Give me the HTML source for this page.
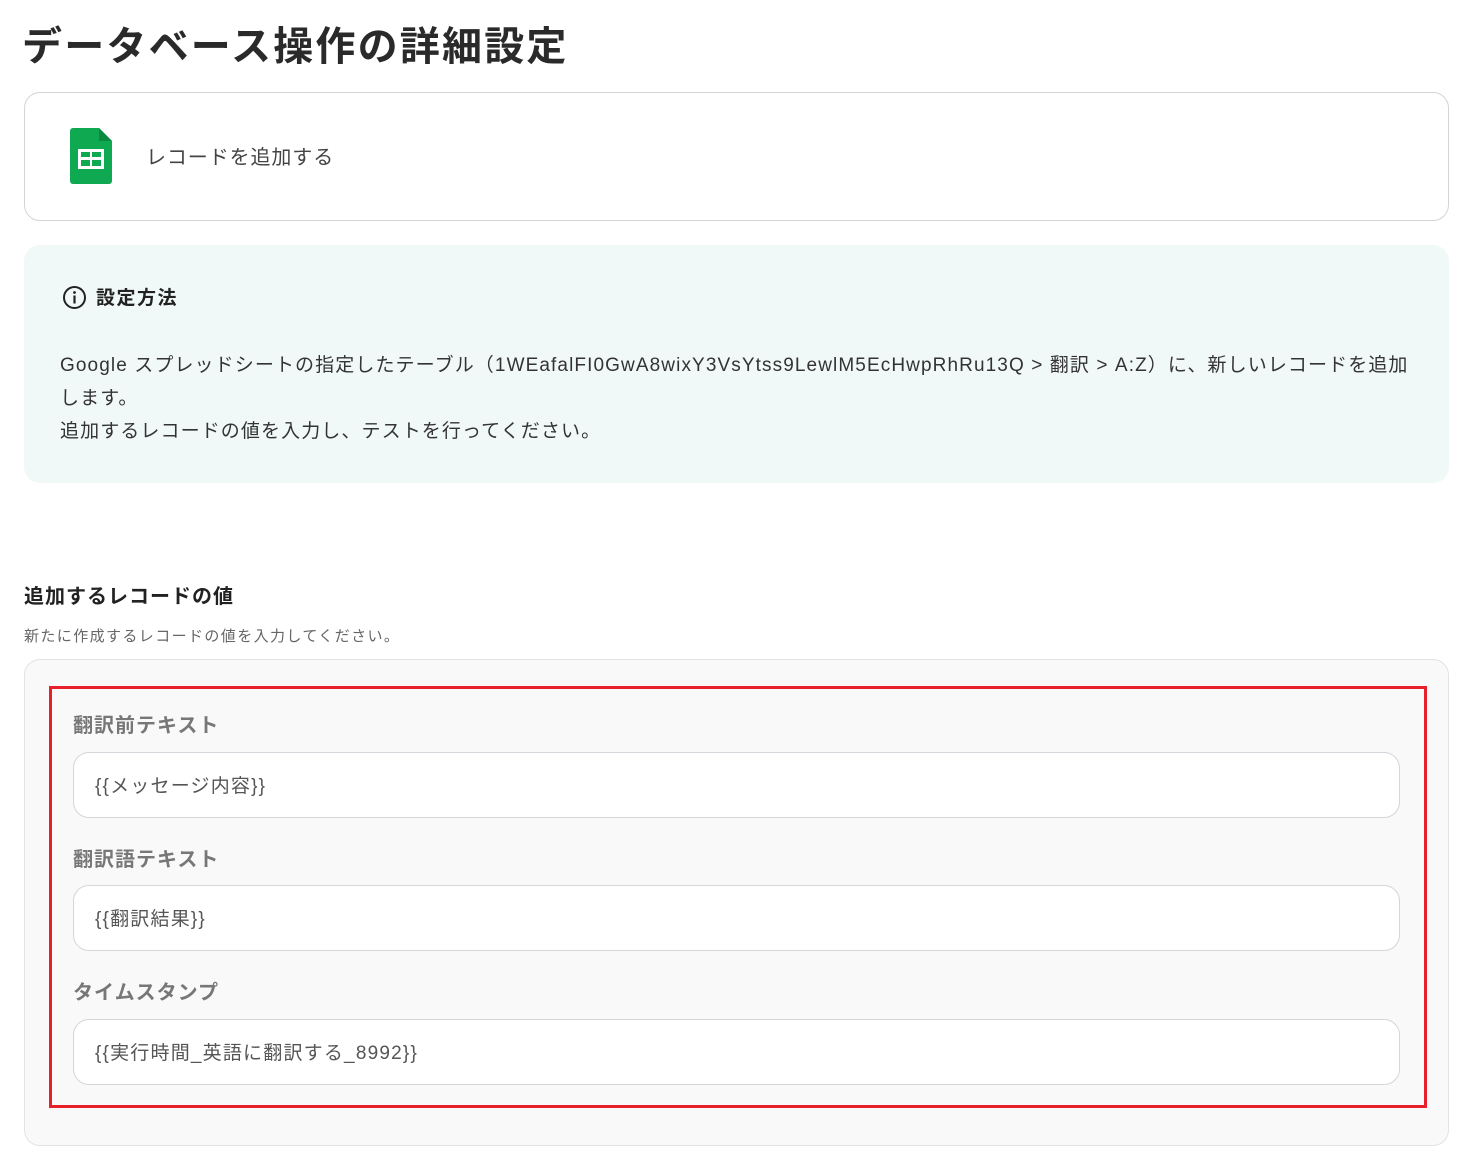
<!DOCTYPE html>
<html><head><meta charset="utf-8"><style>
*{box-sizing:border-box;margin:0;padding:0}
body{width:1473px;height:1168px;background:#fff;font-family:"Liberation Sans","Noto Sans CJK JP",sans-serif;color:#333;position:relative;overflow:hidden}
.abs{position:absolute}
h1{position:absolute;left:22px;top:14px;font-size:40px;font-weight:700;color:#2a2a2a;letter-spacing:2.2px}
.card{left:24px;top:92px;width:1425px;height:129px;border:1px solid #d4d4d4;border-radius:16px}
.info{left:24px;top:245px;width:1425px;height:238px;background:#f1f9f8;border-radius:16px}
.outer{left:24px;top:659px;width:1425px;height:487px;background:#f9f9fa;border:1px solid #e3e3e3;border-radius:16px}
.red{left:49px;top:686px;width:1378px;height:422px;border:3px solid #e8202a}
.lbl{left:73px;font-size:20px;font-weight:700;color:#777;letter-spacing:1px}
.inp{left:73px;width:1327px;height:66px;background:#fff;border:1px solid #d3d6db;border-radius:16px;font-size:19px;color:#555;padding:18px 0 0 21px;letter-spacing:1.2px}
</style></head><body>
<h1>データベース操作の詳細設定</h1>
<div class="abs card"></div>
<svg class="abs" style="left:70px;top:128px" width="42" height="56" viewBox="0 0 42 56"><path d="M3 0H29L42 13V53a3 3 0 0 1-3 3H3a3 3 0 0 1-3-3V3a3 3 0 0 1 3-3z" fill="#0ea951"/><path d="M29 0V13H42z" fill="#0a8a3f"/><rect x="8" y="21" width="26" height="20" fill="#fff"/><rect x="11" y="24" width="9" height="5" fill="#0ea951"/><rect x="22" y="24" width="9" height="5" fill="#0ea951"/><rect x="11" y="32" width="9" height="6" fill="#0ea951"/><rect x="22" y="32" width="9" height="6" fill="#0ea951"/></svg>
<div class="abs" style="left:146px;top:141px;font-size:20px;color:#444;letter-spacing:0.9px">レコードを追加する</div>
<div class="abs info"></div>
<svg class="abs" style="left:62px;top:285px" width="25" height="25" viewBox="0 0 25 25"><circle cx="12.5" cy="12.5" r="10.5" fill="none" stroke="#222" stroke-width="2"/><rect x="11.4" y="10.5" width="2.2" height="8" fill="#222"/><circle cx="12.5" cy="7.5" r="1.4" fill="#222"/></svg>
<div class="abs" style="left:96px;top:283px;font-size:19px;font-weight:700;color:#222;letter-spacing:1.5px">設定方法</div>
<div class="abs" style="left:60px;top:349px;width:1385px;font-size:19px;line-height:33px;color:#333;letter-spacing:1.1px">Google スプレッドシートの指定したテーブル（1WEafalFI0GwA8wixY3VsYtss9LewlM5EcHwpRhRu13Q &gt; 翻訳 &gt; A:Z）に、新しいレコードを追加<br>します。<br>追加するレコードの値を入力し、テストを行ってください。</div>
<div class="abs" style="left:24px;top:580px;font-size:20px;font-weight:700;color:#222;letter-spacing:1px">追加するレコードの値</div>
<div class="abs" style="left:24px;top:625px;font-size:15px;color:#666;letter-spacing:1.4px">新たに作成するレコードの値を入力してください。</div>
<div class="abs outer"></div>
<div class="abs red"></div>
<div class="abs lbl" style="top:709px">翻訳前テキスト</div>
<div class="abs inp" style="top:752px">{{メッセージ内容}}</div>
<div class="abs lbl" style="top:843px">翻訳語テキスト</div>
<div class="abs inp" style="top:885px">{{翻訳結果}}</div>
<div class="abs lbl" style="top:976px">タイムスタンプ</div>
<div class="abs inp" style="top:1019px">{{実行時間_英語に翻訳する_8992}}</div>
</body></html>
